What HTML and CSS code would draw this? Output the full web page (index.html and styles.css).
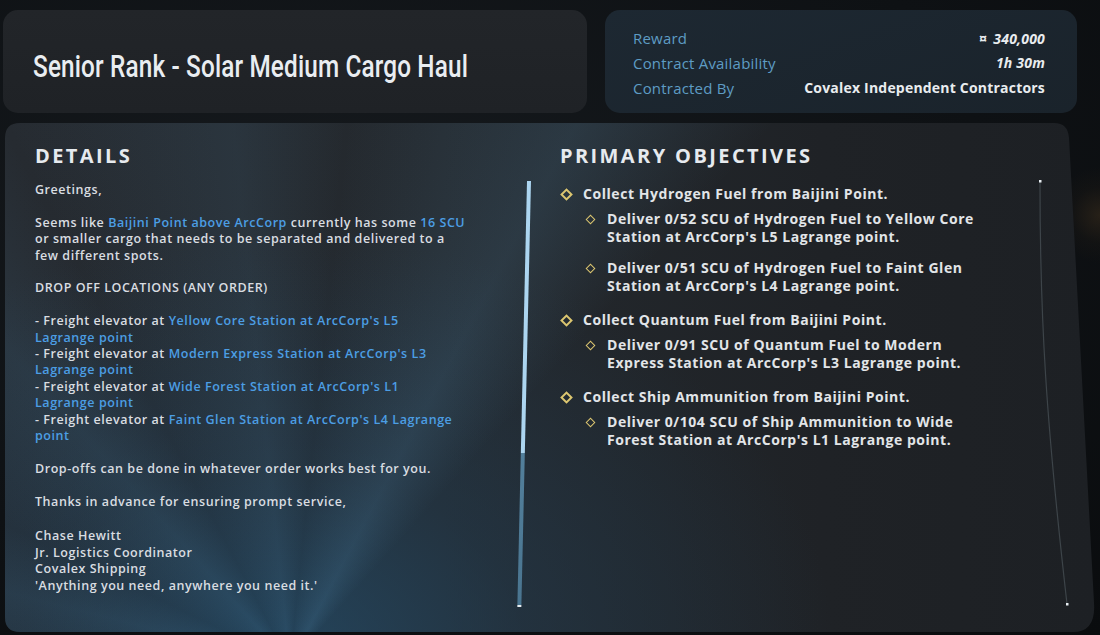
FILE: index.html
```html
<!DOCTYPE html>
<html lang="en">
<head>
<meta charset="utf-8">
<title>Contract</title>
<link rel="stylesheet" href="styles.css">
</head>
<body>
<div class="screen">
  <header class="top">
    <div class="title-card">
      <h1 class="title">Senior Rank - Solar Medium Cargo Haul</h1>
    </div>
    <div class="info-card">
      <div class="info-row"><span class="info-label">Reward</span><span class="info-value slant"><span class="uec">¤</span> 340,000</span></div>
      <div class="info-row"><span class="info-label">Contract Availability</span><span class="info-value slant">1h 30m</span></div>
      <div class="info-row"><span class="info-label">Contracted By</span><span class="info-value">Covalex Independent Contractors</span></div>
    </div>
  </header>

  <main class="panel">
    <section class="details">
      <h2 class="heading">DETAILS</h2>
      <div class="details-body">
        <p>Greetings,</p>
        <p>Seems like <span class="hl">Baijini Point above ArcCorp</span> currently has some <span class="hl">16 SCU</span><br>or smaller cargo that needs to be separated and delivered to a<br>few different spots.</p>
        <p>DROP OFF LOCATIONS (ANY ORDER)</p>
        <p>- Freight elevator at <span class="hl">Yellow Core Station at ArcCorp's L5<br>Lagrange point</span><br>
        - Freight elevator at <span class="hl">Modern Express Station at ArcCorp's L3<br>Lagrange point</span><br>
        - Freight elevator at <span class="hl">Wide Forest Station at ArcCorp's L1<br>Lagrange point</span><br>
        - Freight elevator at <span class="hl">Faint Glen Station at ArcCorp's L4 Lagrange<br>point</span></p>
        <p>Drop-offs can be done in whatever order works best for you.</p>
        <p class="gap-lg">Thanks in advance for ensuring prompt service,</p>
        <p>Chase Hewitt<br>Jr. Logistics Coordinator<br>Covalex Shipping<br>'Anything you need, anywhere you need it.'</p>
      </div>
    </section>

    <div class="scrollbar"><div class="scroll-thumb"></div><div class="scroll-track"></div></div>

    <section class="objectives">
      <h2 class="heading">PRIMARY OBJECTIVES</h2>
      <ul class="obj-list">
        <li class="obj">
          <div class="obj-main"><span class="dia"></span><span>Collect Hydrogen Fuel from Baijini Point.</span></div>
          <div class="obj-sub"><span class="dia small"></span><span>Deliver 0/52 SCU of Hydrogen Fuel to Yellow Core Station at ArcCorp's L5 Lagrange point.</span></div>
          <div class="obj-sub"><span class="dia small"></span><span>Deliver 0/51 SCU of Hydrogen Fuel to Faint Glen Station at ArcCorp's L4 Lagrange point.</span></div>
        </li>
        <li class="obj">
          <div class="obj-main"><span class="dia"></span><span>Collect Quantum Fuel from Baijini Point.</span></div>
          <div class="obj-sub"><span class="dia small"></span><span>Deliver 0/91 SCU of Quantum Fuel to Modern Express Station at ArcCorp's L3 Lagrange point.</span></div>
        </li>
        <li class="obj">
          <div class="obj-main"><span class="dia"></span><span>Collect Ship Ammunition from Baijini Point.</span></div>
          <div class="obj-sub"><span class="dia small"></span><span>Deliver 0/104 SCU of Ship Ammunition to Wide Forest Station at ArcCorp's L1 Lagrange point.</span></div>
        </li>
      </ul>
    </section>

    <svg class="edge-line" width="40" height="430" viewBox="0 0 40 430" aria-hidden="true">
      <path d="M4 2 C4 140 10 240 31 424" fill="none" stroke="#3d4449" stroke-width="1.2"/>
      <rect x="3" y="0" width="2.5" height="2.5" fill="#e8eef2"/>
      <rect x="30" y="423" width="2.5" height="2.5" fill="#e8eef2"/>
    </svg>
  </main>
</div>
</body>
</html>
```

FILE: styles.css
```css
* { box-sizing: border-box; }

html, body {
  margin: 0;
  padding: 0;
  width: 1100px;
  height: 635px;
  overflow: hidden;
}

body {
  background:
    radial-gradient(circle at 1100px 215px, rgba(70, 52, 30, 0.45) 0, rgba(40, 32, 22, 0.2) 28px, transparent 48px),
    radial-gradient(ellipse at 30% 30%, #15191d 0, #0e1114 60%, #0a0c0e 100%);
  font-family: "Open Sans", Roboto, "Liberation Sans", sans-serif;
  color: #dde1e5;
}

.screen {
  padding: 10px 0 0 3px;
  display: flex;
  flex-direction: column;
  gap: 10px;
}

.top {
  display: flex;
  gap: 18px;
  height: 103px;
}

.title-card {
  width: 584px;
  border-radius: 15px;
  background: linear-gradient(180deg, #222529 0%, #1f2226 100%);
  display: flex;
  align-items: center;
  padding: 9px 0 0 30px;
}

.title {
  margin: 0;
  font-family: Roboto, "Liberation Sans", sans-serif;
  font-weight: 500;
  font-size: 32px;
  color: #e9edf1;
  white-space: nowrap;
  display: inline-block;
  transform: scaleX(0.76);
  transform-origin: left center;
  letter-spacing: 0.2px;
}

.info-card {
  width: 472px;
  border-radius: 15px;
  background: linear-gradient(160deg, #1d2832 0%, #1a232b 100%);
  padding: 15px 32px 0 28px;
}

.info-row {
  display: flex;
  justify-content: space-between;
  align-items: center;
  height: 25px;
}

.info-label {
  font-size: 15px;
  color: #5e9cc4;
  letter-spacing: 0.2px;
}

.info-value {
  font-size: 14px;
  font-weight: 700;
  color: #e9ecef;
  letter-spacing: 0.2px;
}

.uec {
  font-size: 15px;
  font-style: normal;
  margin-right: 2px;
}

.slant { font-style: italic; }

.panel {
  position: relative;
  margin-left: 2px;
  width: 1092px;
  height: 509px;
  display: flex;
  padding: 21px 0 0 30px;
  clip-path: path('M15 0 H1049 Q1063 0 1064 15 L1089 480 Q1091 509 1068 509 H15 Q0 509 0 494 V15 Q0 0 15 0 Z');
  background:
    conic-gradient(from 270deg at 285px 540px,
      transparent 0deg,
      rgba(80, 140, 180, 0.10) 14deg,
      transparent 26deg,
      rgba(80, 140, 180, 0.12) 48deg,
      transparent 62deg,
      rgba(90, 150, 190, 0.10) 84deg,
      transparent 96deg,
      rgba(90, 150, 190, 0.16) 118deg,
      transparent 132deg,
      transparent 360deg),
    radial-gradient(ellipse 560px 420px at 270px 530px, rgba(36, 78, 108, 0.75) 0%, rgba(34, 62, 84, 0.45) 45%, transparent 100%),
    linear-gradient(90deg, #262b31 0%, #24292e 40%, #1f2226 75%, #1d2024 100%);
}

.heading {
  margin: 0 0 14px;
  font-family: "Open Sans", sans-serif;
  font-size: 20px;
  line-height: 24px;
  font-weight: 700;
  letter-spacing: 2.4px;
  color: #e6eaee;
}

.details {
  width: 450px;
  flex: none;
}

.details-body {
  font-size: 12.5px;
  line-height: 16.4px;
  font-weight: 600;
  letter-spacing: 0.55px;
  color: #d9dde1;
}

.details-body p { margin: 0 0 16.4px; }

.details-body p.gap-lg { margin-bottom: 18.4px; }

.hl { color: #4c9ee4; font-weight: 600; }

.scrollbar {
  flex: none;
  width: 4px;
  height: 426px;
  margin: 37px 0 0 42px;
  display: flex;
  flex-direction: column;
  transform: skewX(-1.3deg);
  transform-origin: top;
}

.scroll-thumb {
  height: 272px;
  background: #acd5f0;
}

.scroll-track {
  flex: 1;
  background: linear-gradient(180deg, #527f9b, #4a7590);
  border-bottom: 2px solid #e8eef2;
}

.objectives {
  flex: none;
  width: 470px;
  margin-left: 29px;
}

.obj-list {
  list-style: none;
  margin: 17px 0 0;
  padding: 0;
  display: flex;
  flex-direction: column;
  gap: 16px;
}

.obj {
  display: flex;
  flex-direction: column;
  gap: 13px;
  font-size: 14px;
  line-height: 18px;
  font-weight: 700;
  letter-spacing: 0.55px;
  color: #e2e5e8;
}

.obj-main {
  display: flex;
  align-items: flex-start;
  gap: 12px;
  margin-bottom: -6px;
}

.obj-sub {
  display: flex;
  align-items: flex-start;
  gap: 13px;
  padding-left: 26px;
  width: 440px;
}

.dia {
  flex: none;
  width: 9px;
  height: 9px;
  margin: 4.5px 0 0 2px;
  border: 2px solid #dcc670;
  transform: rotate(45deg);
}

.dia.small {
  width: 7px;
  height: 7px;
  margin: 5.5px 0 0 1px;
  border-width: 1.8px;
}

.edge-line {
  position: absolute;
  left: 1031px;
  top: 57px;
}
```
